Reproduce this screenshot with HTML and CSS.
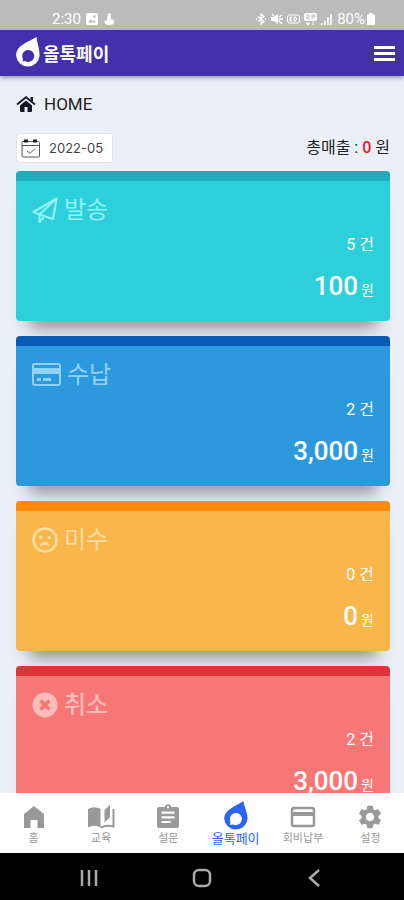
FILE: index.html
```html
<!DOCTYPE html>
<html lang="ko">
<head>
<meta charset="utf-8">
<meta name="viewport" content="width=device-width, initial-scale=1">
<title>올톡페이</title>
<link rel="stylesheet" href="styles.css">
</head>
<body>
<div class="app">
  <div class="status">
    <div class="status-group">
      <span>2:30</span>
      <svg width="12" height="12" viewBox="0 0 12 12"><rect width="12" height="12" rx="2" fill="#fff"/><path d="M2 9.500l2.500-3 2 2 1.500-1.500 2 2.500z" fill="#bbb"/><circle cx="8.500" cy="3.500" r="1.200" fill="#bbb"/></svg>
      <svg width="12" height="12" viewBox="0 0 12 12"><path d="M6 0c2 0 2.500 1.500 2 3.500L7.500 6l3 1c1 .5 1 4-1 4.500L5 12C3 12 1 10 1 8.500L4 7l.5-5C4.500 1 5 0 6 0z" fill="#fff"/></svg>
    </div>
    <div class="status-group status-right">
      <svg width="12" height="12" viewBox="0 0 12 12" fill="none" stroke="#fff" stroke-width="1.300"><path d="M3 3.500l6 5L6 11V1l3 2.500-6 5"/><path d="M1 6h1M10 6h1" stroke-width="2"/></svg>
      <svg width="12" height="12" viewBox="0 0 12 12"><path d="M0 4h3l4-3v10L3 8H0z" fill="#fff"/><path d="M1 1l10 10M8 4l3-2M8 6h4" stroke="#fff" stroke-width="1.300"/></svg>
      <svg width="13" height="12" viewBox="0 0 13 12" fill="none" stroke="#fff"><rect x=".5" y="2" width="12" height="8" rx="2"/><path d="M5 4H3v4h2M3 6h2M7 4v4h1.500q2-2 0-4z"/></svg>
      <svg width="13" height="14" viewBox="0 0 13 14"><rect x="0" y="1" width="13" height="8" rx="2" fill="#fff"/><path d="M2 3h3v2H3v2h3M8 7V3h3v2H8" stroke="#bbb" fill="none"/><path d="M4 10v3M2 11l2 2 2-2M9 13v-3" stroke="#fff" fill="none"/></svg>
      <svg width="12" height="12" viewBox="0 0 12 12" fill="#fff"><path d="M0 10h2v2H0zM3 8h2v4H3zM6 4h2v8H6zM9 1h2v11H9z" opacity=".8"/></svg>
      <span>80%</span>
      <svg class="battery" width="8" height="12" viewBox="0 0 8 12" fill="#fff"><rect y="1.500" width="8" height="10.500" rx="1"/><rect x="2" width="4" height="2"/></svg>
    </div>
  </div>

  <header class="header">
    <a class="brand" href="#">
      <svg width="24" height="32" viewBox="0 0 24 32"><path fill="#fff" fill-rule="evenodd" d="M20.500 0C21 6 24 13 23.500 19a11.700 11.700 0 0 1-23.300 0C0 8 11 6 20.500 0zM12 13a6 6 0 0 0-5 9l-.5 2.500 2.500-.5a6 6 0 1 0 3-11z"/></svg>
      <span>올톡페이</span>
    </a>
    <button class="menu" type="button" aria-label="메뉴"><i></i><i></i><i></i></button>
  </header>

  <main class="main">
    <h1 class="page-title">
      <svg width="20" height="16" viewBox="0 0 20 16"><path d="M10 4.500l6 5V15a1 1 0 0 1-1 1h-3.500v-5h-3v5H5a1 1 0 0 1-1-1V9.500z" fill="#111827"/><path d="M1 8.500l9-7.300 9 7.300" fill="none" stroke="#111827" stroke-width="1.800"/><path d="M14.500 1H17v5l-2.500-2z" fill="#111827"/></svg>
      <span>HOME</span>
    </h1>
    <div class="filter">
      <button class="month" type="button">
        <svg width="20" height="19" viewBox="0 0 20 19" fill="none" stroke="#555"><rect x="1" y="2.500" width="17.500" height="15.500" rx="1"/><path d="M1 6.500h17.500M6 12l3 2.500 5-5" /><path d="M3 2h4M12 2h4" stroke="#222" stroke-width="3"/></svg>
        <span>2022-05</span>
      </button>
      <p class="total">총매출 : <em>0</em> 원</p>
    </div>

    <section class="card card-send">
      <h2>
        <svg width="26" height="26" viewBox="0 0 26 26" fill="none" stroke="currentColor" stroke-width="2.200" stroke-linejoin="round"><path d="M24.500 1.500L1.500 15l6 2.500L21 22z"/><path d="M24.500 1.500L7.500 17.500V25l4.500-5"/></svg>
        <span>발송</span>
      </h2>
      <p class="count">5 건</p>
      <p class="amount"><strong>100</strong><span>원</span></p>
    </section>
    <section class="card card-paid">
      <h2>
        <svg width="29" height="24" viewBox="0 0 29 24"><rect x="1" y="1" width="27" height="21" rx="2" fill="none" stroke="currentColor" stroke-width="2"/><path d="M2 5h25v6H2zM5 15h4v3H5zM11 15h8v3h-8z" fill="currentColor"/></svg>
        <span>수납</span>
      </h2>
      <p class="count">2 건</p>
      <p class="amount"><strong>3,000</strong><span>원</span></p>
    </section>
    <section class="card card-unpaid">
      <h2>
        <svg width="26" height="26" viewBox="0 0 26 26"><circle cx="13" cy="13" r="11.500" fill="none" stroke="currentColor" stroke-width="2.500"/><g fill="currentColor"><circle cx="8.800" cy="10.500" r="1.700"/><circle cx="17.200" cy="10.500" r="1.700"/><path d="M8 19q1-4 5-4t5 4q-5-2-10 0z"/></g></svg>
        <span>미수</span>
      </h2>
      <p class="count">0 건</p>
      <p class="amount"><strong>0</strong><span>원</span></p>
    </section>
    <section class="card card-cancel">
      <h2>
        <svg width="26" height="26" viewBox="0 0 26 26"><circle cx="13" cy="13" r="12.500" fill="currentColor"/><path d="M8.500 8.500l9 9M17.500 8.500l-9 9" stroke="#f77777" stroke-width="3.500"/></svg>
        <span>취소</span>
      </h2>
      <p class="count">2 건</p>
      <p class="amount"><strong>3,000</strong><span>원</span></p>
    </section>
  </main>

  <nav class="tabs">
    <a href="#"><svg width="28" height="28" viewBox="0 0 28 28"><path d="M14 3l10 8v14h-6.500v-8h-7v8H4V11z" fill="currentColor"/></svg><span>홈</span></a>
    <a href="#"><svg width="28" height="28" viewBox="0 0 28 28"><path d="M1 6q6-3.500 12.500 0v18.500q-6.500-3.500-12.500 0z" fill="currentColor"/><path d="M17.500 7L23 2v12.500l-5.500 5z" fill="currentColor"/><path d="M26.500 6v17.500q-6.500-2-13 1" fill="none" stroke="currentColor" stroke-width="2"/></svg><span>교육</span></a>
    <a href="#"><svg width="28" height="28" viewBox="0 0 28 28"><path fill="currentColor" fill-rule="evenodd" d="M5 4h5.500a3.600 3.600 0 0 1 7 0H23a2 2 0 0 1 2 2v17a2 2 0 0 1-2 2H5a2 2 0 0 1-2-2V6a2 2 0 0 1 2-2zm9-1a1.200 1.200 0 1 0 0 2.400A1.200 1.200 0 0 0 14 3zM7.500 8.500v2.200h13V8.500zm0 4.700v2.200h13v-2.200zm0 4.700v2.200h9v-2.200z"/></svg><span>설문</span></a>
    <a class="active" href="#"><svg width="24" height="30" viewBox="0 0 24 30"><path fill="currentColor" fill-rule="evenodd" d="M19.500 0C20 6 24 12 23.500 18a11.700 11.700 0 0 1-23.300 0C0 9 10 6 19.500 0zM12 12a6 6 0 0 0-5.500 8.500L6 24l3.500-.5A6 6 0 1 0 12 12z"/></svg><span>올톡페이</span></a>
    <a href="#"><svg width="28" height="28" viewBox="0 0 28 28"><rect x="3" y="5" width="22" height="18" rx="2" fill="none" stroke="currentColor" stroke-width="2.500"/><path d="M3 9h22v4H3z" fill="currentColor"/></svg><span>회비납부</span></a>
    <a href="#"><svg width="28" height="28" viewBox="0 0 24 24"><path fill="currentColor" d="M19.140 12.940c.04-.3.060-.61.060-.94s-.02-.64-.07-.94l2.030-1.580a.49.49 0 0 0 .12-.61l-1.920-3.320a.49.49 0 0 0-.59-.22l-2.390.96a7 7 0 0 0-1.620-.94l-.36-2.540a.48.48 0 0 0-.48-.41h-3.840a.48.48 0 0 0-.47.41l-.36 2.540c-.59.24-1.130.57-1.620.94l-2.390-.96a.49.49 0 0 0-.59.220L2.740 8.870a.49.49 0 0 0 .12.610l2.030 1.580a6 6 0 0 0 0 1.880l-2.030 1.580a.49.49 0 0 0-.12.610l1.920 3.320c.12.220.37.290.59.220l2.390-.96c.5.380 1.030.7 1.620.94l.36 2.540c.05.240.24.410.48.410h3.840c.24 0 .44-.17.470-.41l.36-2.540a7 7 0 0 0 1.620-.94l2.390.96c.22.080.47 0 .59-.22l1.920-3.320a.49.49 0 0 0-.12-.61zM12 15.600a3.600 3.600 0 1 1 0-7.200 3.600 3.600 0 0 1 0 7.200z"/></svg><span>설정</span></a>
  </nav>

  <div class="system">
    <button type="button" aria-label="최근 앱"><svg width="20" height="20" viewBox="0 0 20 20"><path d="M3 2v16M10 2v16M17 2v16" stroke="#aaa" stroke-width="2.500"/></svg></button>
    <button type="button" aria-label="홈 화면"><svg width="20" height="20" viewBox="0 0 20 20"><rect x="2" y="2" width="16" height="16" rx="5" fill="none" stroke="#aaa" stroke-width="2.500"/></svg></button>
    <button type="button" aria-label="뒤로"><svg width="20" height="20" viewBox="0 0 20 20"><path d="M14 2l-9 8 9 8" fill="none" stroke="#aaa" stroke-width="2.500"/></svg></button>
  </div>
</div>
</body>
</html>
```
FILE: styles.css
```css
* { box-sizing: border-box; }

body {
  margin: 0;
  background: #ebf0f8;
  color: #222;
  font-family: Roboto, "Noto Sans CJK KR", sans-serif;
}

h1, h2, p { margin: 0; }

button {
  padding: 0;
  border: 0;
  background: none;
  font-family: inherit;
}

a { color: inherit; text-decoration: none; }
svg { display: block; flex: none; }

.app {
  display: flex;
  flex-direction: column;
  height: 100vh;
  overflow: hidden;
}

.status {
  display: flex;
  flex: none;
  align-items: center;
  justify-content: space-between;
  padding: 8px 29px 0 52px;
  height: 30px;
  background: #bbb;
  color: #fff;
  font-size: 15px;
}

.status-group { display: flex; align-items: center; gap: 5px; }
.status-right { gap: 4px; }
.battery { margin-left: -2px; }

.header {
  z-index: 1;
  display: flex;
  flex: none;
  align-items: center;
  justify-content: space-between;
  padding: 0 9px 0 16px;
  height: 46px;
  background: #4330aa;
  box-shadow: 0 2px 4px rgba(0, 0, 0, .35);
}

.brand {
  display: flex;
  align-items: center;
  gap: 3px;
  color: #fff;
  font-size: 18px;
  font-weight: 700;
}

.menu { display: grid; gap: 3px; }
.menu i { width: 21px; height: 3px; background: #fff; }

.main {
  flex: 1;
  min-height: 0;
  overflow: hidden;
  padding: 14px 14px 0 16px;
}

.page-title {
  display: flex;
  align-items: center;
  gap: 8px;
  height: 28px;
  font-size: 17px;
  font-weight: 400;
}

.filter {
  display: flex;
  align-items: center;
  justify-content: space-between;
  margin: 15px 0 8px;
}

.month {
  display: flex;
  align-items: center;
  gap: 8px;
  padding: 0 9px 0 4px;
  height: 30px;
  border: 1px solid #dfe3e8;
  border-radius: 3px;
  background: #fff;
  color: #444;
  font-family: Inter, sans-serif;
  font-size: 13px;
}

.total { font-size: 16px; line-height: 24px; }
.total em { color: #e3182a; font-style: normal; font-weight: 500; }

.card {
  margin-bottom: 15px;
  padding: 11px 16px 18px;
  border-top: 10px solid;
  border-radius: 4px;
  box-shadow: 0 20px 16px -13px rgba(0, 0, 0, .4);
  color: #fff;
  text-align: right;
}

.card h2 {
  display: flex;
  align-items: center;
  gap: 6px;
  height: 36px;
  font-size: 24px;
  font-weight: 400;
  line-height: 36px;
}

.card-send { border-color: #1caebb; background: #2dcfda; }
.card-send h2 { color: #91f2f5; }
.card-paid { border-color: #075bb4; background: #2b99dc; }
.card-paid h2 { color: #91d2fb; }
.card-unpaid { border-color: #ff8a08; background: #f9b64b; }
.card-unpaid h2 { color: #fddda4; }
.card-cancel { border-color: #dc3539; background: #f77777; }
.card-cancel h2 { color: #fdbcb9; font-weight: 500; }

.count { margin: 5px 0 12px; font-size: 16px; line-height: 24px; }

.amount {
  display: flex;
  align-items: baseline;
  justify-content: flex-end;
  gap: 3px;
  height: 34px;
  font-size: 14px;
}

.amount strong { font-size: 26px; font-weight: 500; line-height: 34px; }
.amount span { line-height: 20px; }

.tabs {
  z-index: 1;
  display: grid;
  flex: none;
  grid-template-columns: repeat(6, 1fr);
  height: 60px;
  background: #fff;
  color: #999;
}

.tabs a {
  display: flex;
  flex-direction: column;
  align-items: center;
  justify-content: flex-end;
  padding-bottom: 6px;
  font-size: 11px;
  line-height: 16px;
  white-space: nowrap;
}

.tabs .active { color: #2b63f3; font-size: 13px; }

.system {
  display: flex;
  flex: none;
  align-items: center;
  justify-content: space-between;
  padding: 2px 79px 0;
  height: 47px;
  background: #000;
}
```
